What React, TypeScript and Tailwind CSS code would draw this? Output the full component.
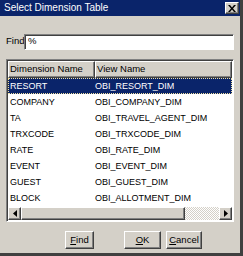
import React from "react";

const rows = [
  ["RESORT", "OBI_RESORT_DIM"],
  ["COMPANY", "OBI_COMPANY_DIM"],
  ["TA", "OBI_TRAVEL_AGENT_DIM"],
  ["TRXCODE", "OBI_TRXCODE_DIM"],
  ["RATE", "OBI_RATE_DIM"],
  ["EVENT", "OBI_EVENT_DIM"],
  ["GUEST", "OBI_GUEST_DIM"],
  ["BLOCK", "OBI_ALLOTMENT_DIM"],
];

const raised =
  "border border-t-white border-l-white border-r-[#404040] border-b-[#404040] shadow-[inset_-1px_-1px_0_#808080]";

function Btn({ label, u, w }: { label: string; u: number; w: string }) {
  return (
    <div className={`${raised} ${w} h-[18px] bg-[#d4d0c8] flex items-center justify-center text-[9.5px] text-black`}>
      {label.slice(0, u)}
      <span className="underline">{label[u]}</span>
      {label.slice(u + 1)}
    </div>
  );
}

export default function App() {
  return (
    <div
      className="w-[243px] h-[256px] bg-[#d4d0c8] flex flex-col border-r-[3px] border-b-[3px] border-r-[#404040] border-b-[#404040]"
      style={{ fontFamily: '"Liberation Sans", Arial, sans-serif' }}
    >
      {/* Title bar */}
      <div className="h-[16px] bg-[#0a246a] flex items-center justify-between pl-[4px] pr-[1px]">
        <span className="text-white text-[10px] leading-none">Select Dimension Table</span>
        <div className={`${raised} w-[14px] h-[12px] bg-[#d4d0c8] flex items-center justify-center`}>
          <svg width="8" height="7" viewBox="0 0 8 7">
            <path d="M0 0h2l2 2.5L6 0h2L5 3.5 8 7H6L4 4.5 2 7H0l3-3.5z" fill="#000" />
          </svg>
        </div>
      </div>

      <div className="flex flex-col px-[6px] pt-[18px]">
        {/* Find */}
        <div className="flex items-center h-[15px]">
          <span className="text-[9.5px] text-black w-[18px]">Find</span>
          <div className="flex-1 h-[16px] bg-white border border-t-[#808080] border-l-[#808080] border-r-white border-b-white shadow-[inset_1px_1px_0_#404040] flex items-center pl-[3px] text-[9.5px] text-black">
            %
          </div>
        </div>

        {/* List */}
        <div className="mt-[10px] h-[163px] bg-white border border-t-[#808080] border-l-[#808080] border-r-white border-b-white shadow-[inset_1px_1px_0_#404040] p-[1px] flex flex-col">
          <div className="flex h-[17px] shrink-0">
            <div className={`${raised} w-[87px] bg-[#d4d0c8] flex items-center pl-[1px] text-[9.5px] text-black whitespace-nowrap`}>Dimension Name</div>
            <div className={`${raised} flex-1 bg-[#d4d0c8] flex items-center pl-[1px] text-[9.5px] text-black`}>View Name</div>
          </div>
          <div className="flex-1 flex flex-col">
            {rows.map(([a, b], i) => (
              <div
                key={a}
                className={`flex h-[16px] items-center pt-[1px] text-[9px] whitespace-nowrap ${
                  i === 0 ? "bg-[#0a246a] text-white border border-dotted border-[#f0e0a0]" : "text-black border border-transparent"
                }`}
              >
                <span className="w-[86px] pl-[1px]">{a}</span>
                <span>{b}</span>
              </div>
            ))}
          </div>
          {/* Horizontal scrollbar */}
          <div className="flex h-[13px] shrink-0">
            <div className={`${raised} w-[13px] bg-[#d4d0c8] flex items-center justify-center`}>
              <svg width="4" height="7" viewBox="0 0 4 7"><path d="M4 0v7L0 3.5z" fill="#000" /></svg>
            </div>
            <div className={`${raised} w-[164px] bg-[#d4d0c8]`} />
            <div className="flex-1 bg-[repeating-conic-gradient(#ffffff_0_25%,#d4d0c8_0_50%)] bg-[length:2px_2px]" />
            <div className={`${raised} w-[13px] bg-[#d4d0c8] flex items-center justify-center`}>
              <svg width="4" height="7" viewBox="0 0 4 7"><path d="M0 0v7l4-3.5z" fill="#000" /></svg>
            </div>
          </div>
        </div>

        {/* Buttons */}
        <div className="flex mt-[9px] pl-[59px]">
          <Btn label="Find" u={0} w="w-[29px]" />
          <div className="ml-[30px]">
            <Btn label="OK" u={0} w="w-[37px]" />
          </div>
          <div className="ml-[5px]">
            <Btn label="Cancel" u={0} w="w-[36px]" />
          </div>
        </div>
      </div>
    </div>
  );
}
